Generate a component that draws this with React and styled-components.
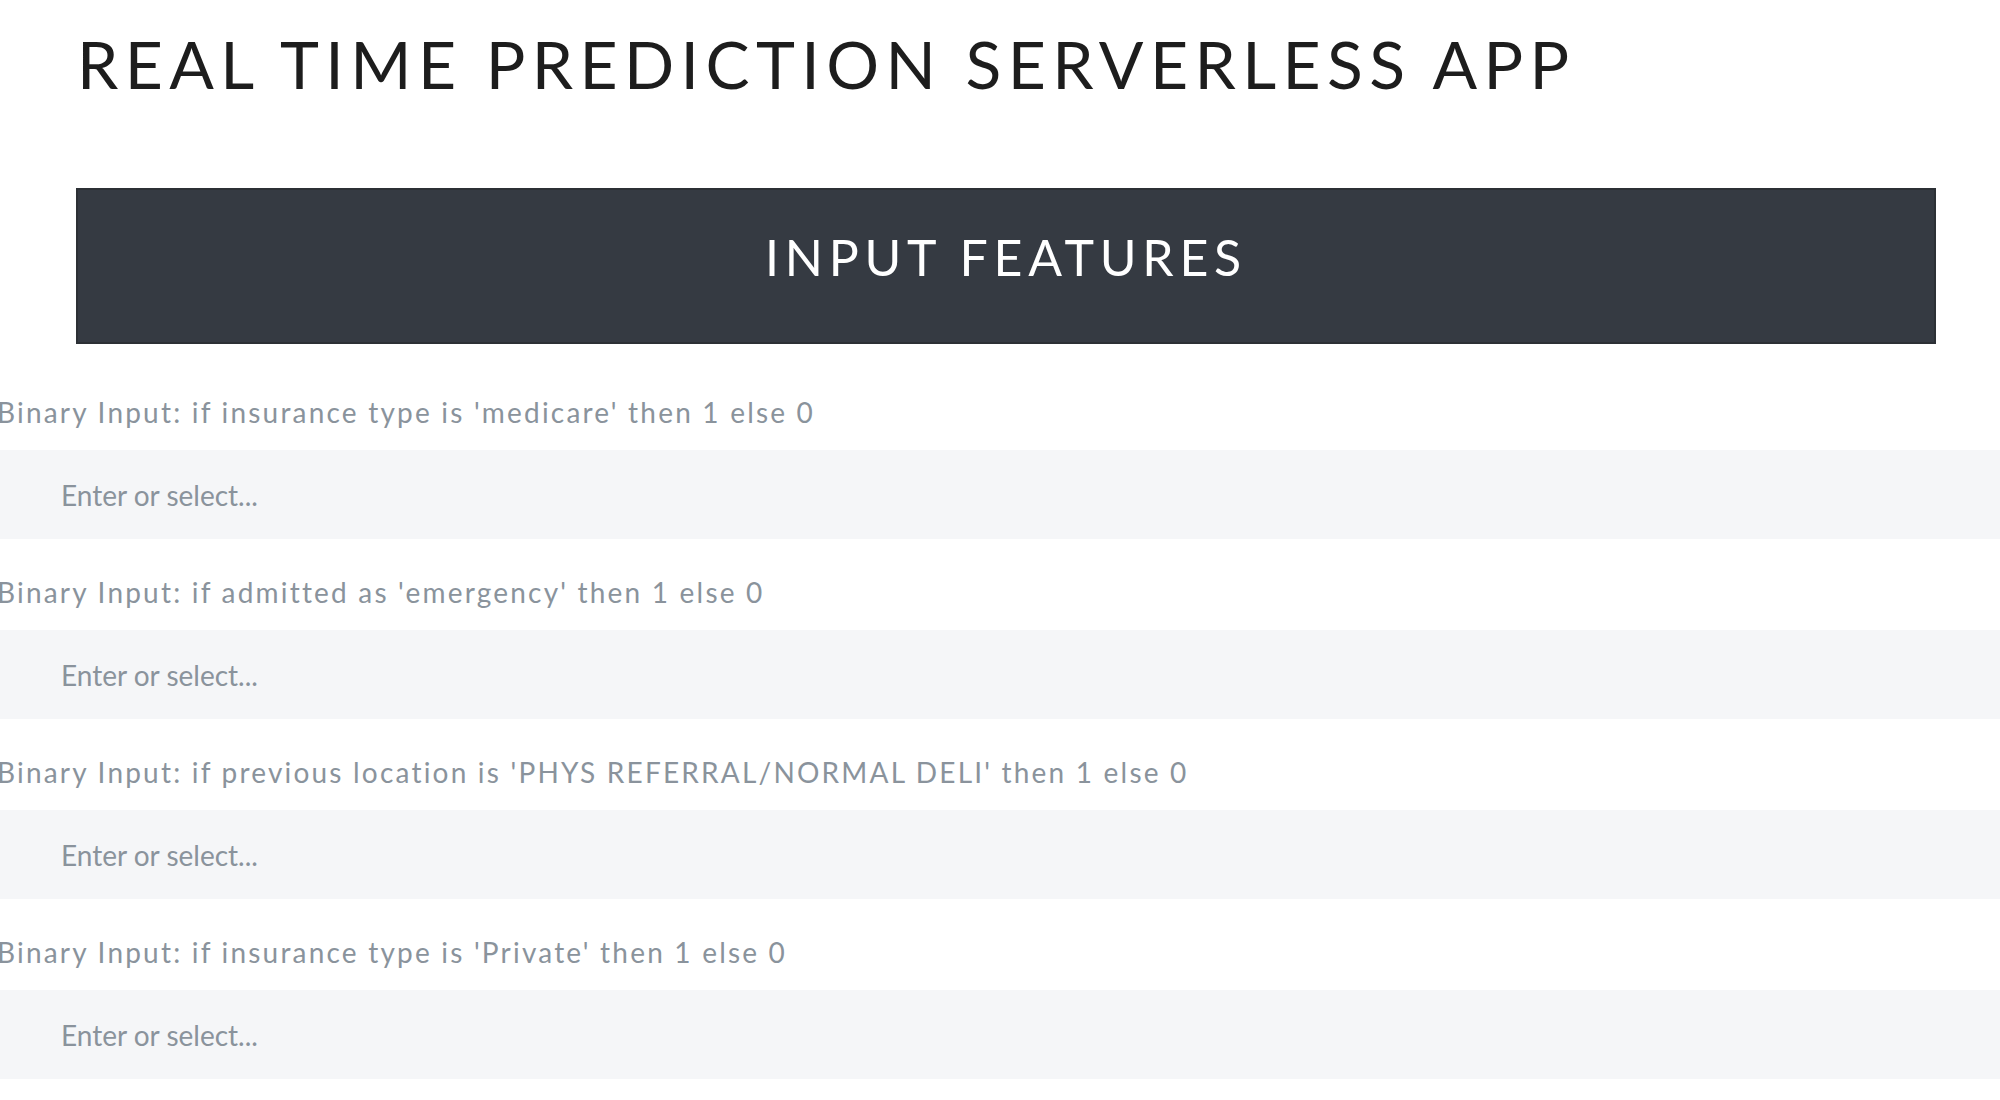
import React from 'react'
import styled, { createGlobalStyle } from 'styled-components'

const GlobalStyle = createGlobalStyle`
  html, body {
    margin: 0;
    padding: 0;
    background: #FFFFFF;
    overflow: hidden;
  }
  body {
    font-family: Lato, "Noto Sans", sans-serif;
  }
`

const Page = styled.div`
  display: flex;
  flex-direction: column;
  width: 2000px;
`

const Title = styled.h1`
  color: #1D1D1D;
  font-size: 66px;
  font-weight: 400;
  letter-spacing: 6.4px;
  line-height: 80px;
  margin: 24px 0 0 77px;
`

const Banner = styled.div`
  align-items: center;
  background: #353A42;
  border: 2px solid #2C3035;
  box-sizing: border-box;
  display: flex;
  height: 156px;
  justify-content: center;
  margin: 84px 64px 0 76px;
  padding-bottom: 19px;
`

const BannerText = styled.h2`
  color: #FFFFFF;
  font-size: 50px;
  font-weight: 400;
  letter-spacing: 5.8px;
  margin: 0;
`

const Form = styled.div`
  display: flex;
  flex-direction: column;
  gap: 35px;
  margin-top: 50px;
`

const Field = styled.div`
  display: flex;
  flex-direction: column;
  gap: 20px;
`

const Label = styled.label`
  color: #8A939C;
  font-size: 28px;
  letter-spacing: 2.2px;
  line-height: 36px;
  margin-left: -3px;
`

const Select = styled.div`
  align-items: center;
  background: #F5F6F8;
  display: flex;
  height: 89px;
  padding-left: 61px;
`

const Placeholder = styled.span`
  color: #8A939C;
  font-size: 28px;
`

const fields = [
  "Binary Input: if insurance type is 'medicare' then 1 else 0",
  "Binary Input: if admitted as 'emergency' then 1 else 0",
  "Binary Input: if previous location is 'PHYS REFERRAL/NORMAL DELI' then 1 else 0",
  "Binary Input: if insurance type is 'Private' then 1 else 0",
]

export default function App() {
  return (
    <Page>
      <GlobalStyle />
      <Title>REAL TIME PREDICTION SERVERLESS APP</Title>
      <Banner>
        <BannerText>INPUT FEATURES</BannerText>
      </Banner>
      <Form>
        {fields.map(label => (
          <Field key={label}>
            <Label>{label}</Label>
            <Select>
              <Placeholder>Enter or select...</Placeholder>
            </Select>
          </Field>
        ))}
      </Form>
    </Page>
  )
}
